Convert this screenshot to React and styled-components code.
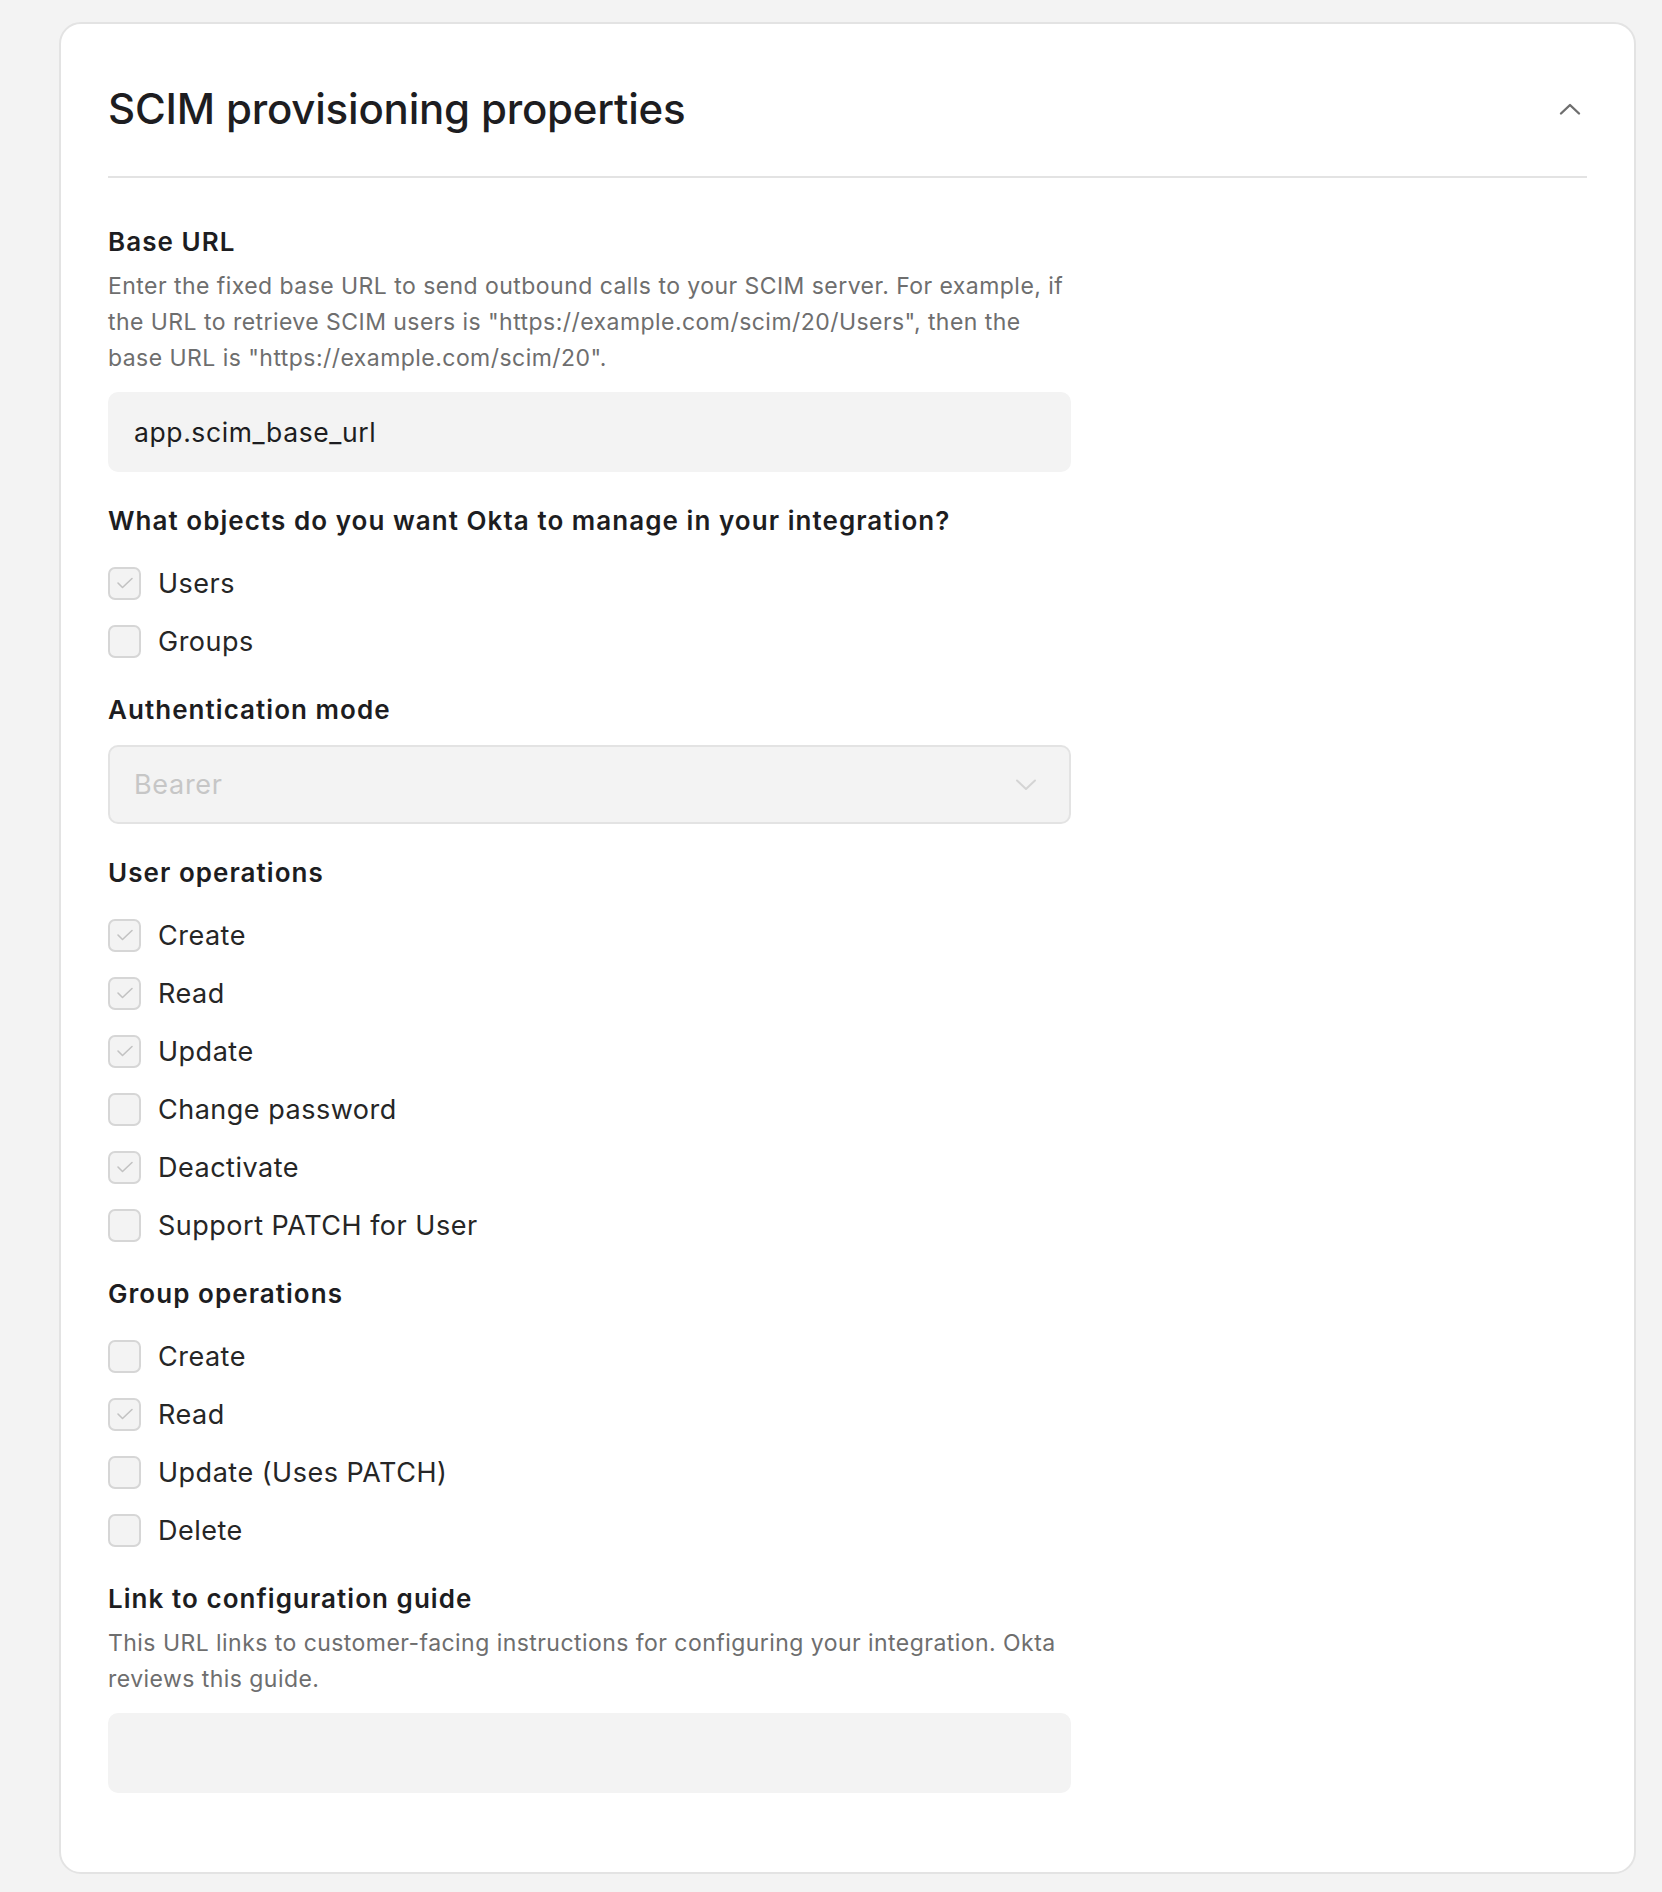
import React from 'react';
import styled, { createGlobalStyle } from 'styled-components';

const GlobalStyle = createGlobalStyle`
	* {
		box-sizing: border-box;
	}
	body {
		margin: 0;
		background: #f3f3f3;
		font-family: Inter, 'Noto Sans', sans-serif;
		color: #1d1d21;
	}
`;

const Page = styled.div`
	padding: 22px 26px 20px 59px;
`;

const Card = styled.section`
	background: #fff;
	border: 2px solid #e3e3e3;
	border-radius: 22px;
	padding: 0 47px;
`;

const Header = styled.header`
	display: flex;
	align-items: center;
	justify-content: space-between;
	padding: 61px 0 43px;
	border-bottom: 2px solid #e3e3e3;
`;

const Title = styled.h2`
	margin: 0;
	font-size: 42px;
	line-height: 48px;
	font-weight: 500;
	letter-spacing: -0.2px;
	color: #1d1d21;
`;

const CollapseButton = styled.button`
	display: flex;
	align-items: center;
	justify-content: center;
	width: 30px;
	height: 30px;
	margin-right: 2px;
	padding: 0;
	border: none;
	background: transparent;
	color: #6e6e6e;
	cursor: pointer;
`;

const Form = styled.div`
	display: flex;
	flex-direction: column;
	gap: 33px;
	width: 963px;
	padding: 48px 0 79px;
`;

const Field = styled.div`
	display: flex;
	flex-direction: column;
`;

const Label = styled.label`
	font-size: 26px;
	line-height: 32px;
	font-weight: 600;
	letter-spacing: 1.05px;
	color: #1d1d21;
	margin-bottom: ${({ gap }) => gap || 0}px;
`;

const Hint = styled.p`
	margin: 10px 0 16px;
	font-size: 23px;
	line-height: 36px;
	letter-spacing: 0.45px;
	color: #6e6e6e;
`;

const TextInput = styled.div`
	display: flex;
	align-items: center;
	height: 80px;
	padding: 0 26px;
	border-radius: 10px;
	background: #f3f3f3;
	font-size: 26.5px;
	letter-spacing: 0.6px;
	color: #1d1d21;
`;

const Select = styled.div`
	display: flex;
	align-items: center;
	justify-content: space-between;
	height: 79px;
	padding: 0 32px 0 24px;
	border: 2px solid #e3e3e3;
	border-radius: 10px;
	background: #f3f3f3;
	font-size: 27px;
	letter-spacing: 0.7px;
	color: #c6c6c6;
`;

const CheckList = styled.div`
	display: flex;
	flex-direction: column;
	gap: 18px;
`;

const CheckRow = styled.label`
	display: flex;
	align-items: center;
	gap: 17px;
	height: 40px;
	font-size: 27px;
	letter-spacing: 0.5px;
	color: #262626;
`;

const Box = styled.span`
	display: flex;
	align-items: center;
	justify-content: center;
	flex: 0 0 33px;
	width: 33px;
	height: 33px;
	border: 2px solid #d6d6d6;
	border-radius: 7px;
	background: #f3f3f3;
`;

const ChevronUp = () => (
	<svg width="24" height="24" viewBox="0 0 24 24" fill="none">
		<path d="M3 16.5 L12 8 L21 16.5" stroke="currentColor" strokeWidth="2.4" strokeLinecap="round" strokeLinejoin="round" />
	</svg>
);

const ChevronDown = () => (
	<svg width="22" height="14" viewBox="0 0 22 14" fill="none">
		<path d="M2 2.5 L11 11 L20 2.5" stroke="#d4d4d4" strokeWidth="2" strokeLinecap="round" strokeLinejoin="round" />
	</svg>
);

const Checkbox = ({ label, checked }) => (
	<CheckRow>
		<Box>
			{checked && (
				<svg width="18" height="14" viewBox="0 0 18 14" fill="none">
					<path d="M2 7 L6.5 11.5 L16 2.5" stroke="#c2c2c2" strokeWidth="1.6" strokeLinecap="round" strokeLinejoin="round" />
				</svg>
			)}
		</Box>
		{label}
	</CheckRow>
);

const objects = [
	{ label: 'Users', checked: true },
	{ label: 'Groups', checked: false },
];

const userOps = [
	{ label: 'Create', checked: true },
	{ label: 'Read', checked: true },
	{ label: 'Update', checked: true },
	{ label: 'Change password', checked: false },
	{ label: 'Deactivate', checked: true },
	{ label: 'Support PATCH for User', checked: false },
];

const groupOps = [
	{ label: 'Create', checked: false },
	{ label: 'Read', checked: true },
	{ label: 'Update (Uses PATCH)', checked: false },
	{ label: 'Delete', checked: false },
];

const CheckGroup = ({ title, items }) => (
	<Field>
		<Label gap={26}>{title}</Label>
		<CheckList>
			{items.map((item) => (
				<Checkbox key={item.label} {...item} />
			))}
		</CheckList>
	</Field>
);

const App = () => {
	return (
		<Page>
			<GlobalStyle />
			<Card>
				<Header>
					<Title>SCIM provisioning properties</Title>
					<CollapseButton aria-label='Collapse'>
						<ChevronUp />
					</CollapseButton>
				</Header>
				<Form>
					<Field>
						<Label>Base URL</Label>
						<Hint>
							Enter the fixed base URL to send outbound calls to your SCIM server. For example, if the URL to
							retrieve SCIM users is "https://example.com/scim/20/Users", then the base URL is
							"https://example.com/scim/20".
						</Hint>
						<TextInput>app.scim_base_url</TextInput>
					</Field>
					<CheckGroup title='What objects do you want Okta to manage in your integration?' items={objects} />
					<Field>
						<Label gap={19}>Authentication mode</Label>
						<Select>
							<span>Bearer</span>
							<ChevronDown />
						</Select>
					</Field>
					<CheckGroup title='User operations' items={userOps} />
					<CheckGroup title='Group operations' items={groupOps} />
					<Field>
						<Label>Link to configuration guide</Label>
						<Hint>
							This URL links to customer-facing instructions for configuring your integration. Okta reviews
							this guide.
						</Hint>
						<TextInput />
					</Field>
				</Form>
			</Card>
		</Page>
	);
};

export default App;
